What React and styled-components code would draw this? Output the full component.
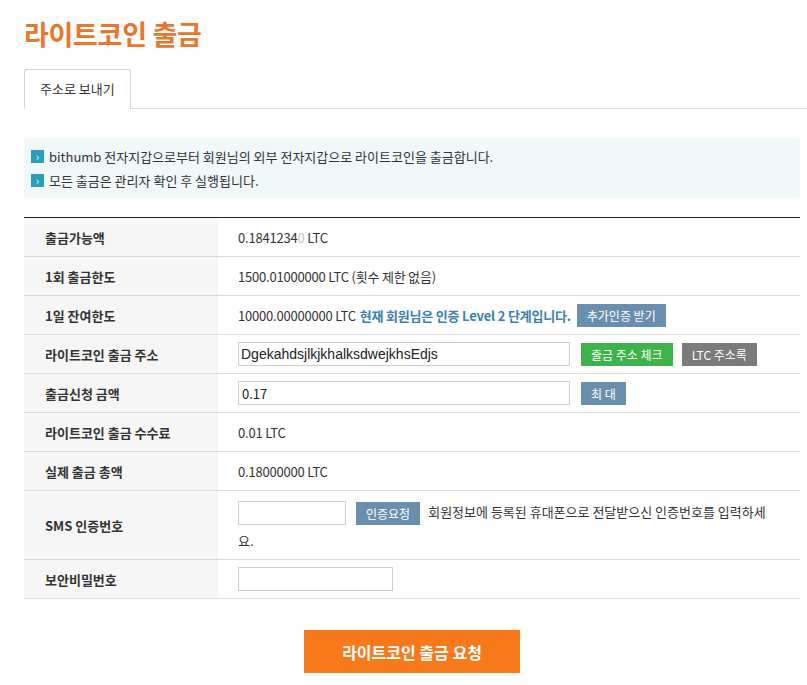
import React from "react";
import styled, { createGlobalStyle } from "styled-components";

const Global = createGlobalStyle`
  html, body { margin: 0; padding: 0; background: #fff; }
  body {
    font-family: "Noto Sans CJK KR", "Noto Sans", sans-serif;
    font-size: 13px;
    color: #333;
  }
  * { box-sizing: border-box; }
`;

const Page = styled.div`
  width: 807px;
  padding: 17px 7px 40px 24px;
`;

const Title = styled.h1`
  margin: 0;
  font-size: 27px;
  line-height: 33px;
  font-weight: 700;
  color: #e8772e;
  letter-spacing: -0.3px;
`;

const TabBar = styled.div`
  display: flex;
  margin: 19px -7px 0 0;
  border-bottom: 1px solid #dcdcdc;
`;

const Tab = styled.div`
  height: 40px;
  margin-bottom: -1px;
  padding: 0 15px;
  line-height: 38px;
  border: 1px solid #d4d4d4;
  border-bottom: 1px solid #fff;
  border-radius: 3px 3px 0 0;
  background: #fff;
  color: #333;
  font-size: 13px;
`;

const Notice = styled.ul`
  list-style: none;
  margin: 29px 0 0;
  padding: 6px 7px;
  background: #f0f8fa;
  border-radius: 3px;
`;

const NoticeItem = styled.li`
  display: flex;
  align-items: center;
  gap: 5px;
  height: 24px;
  color: #333;
`;

const Bullet = styled.span`
  display: inline-flex;
  align-items: center;
  justify-content: center;
  width: 13px;
  height: 13px;
  background: #2b9db9;
  color: #fff;
  font-size: 11px;
  line-height: 1;
`;

const Table = styled.div`
  margin-top: 19px;
  border-top: 1px solid #222;
`;

const Row = styled.div`
  display: grid;
  grid-template-columns: 194px 1fr;
  border-bottom: 1px solid #dcdcdc;
  min-height: ${(p) => p.$h || 39}px;
`;

const Label = styled.div`
  display: flex;
  align-items: center;
  padding-left: 21px;
  background: #f6f6f6;
  font-weight: 700;
  color: #333;
`;

const Value = styled.div`
  display: flex;
  align-items: center;
  padding-left: 20px;
  color: #333;
  letter-spacing: -0.2px;
`;

const WrapValue = styled.div`
  padding: 6px 0 4px 20px;
  line-height: 29px;
  color: #333;
`;

const Faded = styled.span`
  color: #c8c8c8;
`;

const Highlight = styled.strong`
  color: #3a80b2;
  font-weight: 700;
  margin-left: 4px;
`;

const Input = styled.input`
  width: ${(p) => p.$w}px;
  height: 24px;
  padding: 0 ${(p) => (p.$big ? 2 : 3)}px;
  border: 1px solid #cfcfcf;
  background: #fff;
  color: #222;
  font-family: ${(p) => (p.$big ? '"Liberation Sans", Arial, sans-serif' : '"Noto Sans CJK KR", sans-serif')};
  font-size: ${(p) => (p.$big ? 14 : 13)}px;
  letter-spacing: 0;
  outline: none;
  vertical-align: middle;
`;

const Btn = styled.button`
  height: 23px;
  margin-left: ${(p) => p.$ml || 0}px;
  padding: 0 10px;
  border: none;
  background: ${(p) => p.$bg};
  color: #fff;
  font-family: "Noto Sans CJK KR", sans-serif;
  font-size: 12px;
  line-height: 23px;
  letter-spacing: 0;
  vertical-align: middle;
  cursor: pointer;
`;

const Help = styled.span`
  margin-left: 8px;
`;

const Actions = styled.div`
  display: flex;
  justify-content: center;
  margin-top: 31px;
`;

const Submit = styled.button`
  width: 216px;
  height: 43px;
  border: none;
  background: #f7791a;
  color: #fff;
  font-family: "Noto Sans CJK KR", sans-serif;
  font-size: 16px;
  font-weight: 700;
  cursor: pointer;
`;

export default function App() {
  return (
    <>
      <Global />
      <Page>
        <Title>라이트코인 출금</Title>
        <TabBar>
          <Tab>주소로 보내기</Tab>
        </TabBar>
        <Notice>
          <NoticeItem>
            <Bullet>›</Bullet>
            bithumb 전자지갑으로부터 회원님의 외부 전자지갑으로 라이트코인을 출금합니다.
          </NoticeItem>
          <NoticeItem>
            <Bullet>›</Bullet>
            모든 출금은 관리자 확인 후 실행됩니다.
          </NoticeItem>
        </Notice>
        <Table>
          <Row>
            <Label>출금가능액</Label>
            <Value>
              0.1841234<Faded>0</Faded>&nbsp;LTC
            </Value>
          </Row>
          <Row>
            <Label>1회 출금한도</Label>
            <Value>1500.01000000 LTC (횟수 제한 없음)</Value>
          </Row>
          <Row>
            <Label>1일 잔여한도</Label>
            <Value>
              10000.00000000 LTC
              <Highlight>현재 회원님은 인증 Level 2 단계입니다.</Highlight>
              <Btn $bg="#6a8fae" $ml={6}>추가인증 받기</Btn>
            </Value>
          </Row>
          <Row>
            <Label>라이트코인 출금 주소</Label>
            <Value>
              <Input $w={332} $big defaultValue="DgekahdsjlkjkhalksdwejkhsEdjs" />
              <Btn $bg="#3db34a" $ml={11}>출금 주소 체크</Btn>
              <Btn $bg="#7b7b7b" $ml={9}>LTC 주소록</Btn>
            </Value>
          </Row>
          <Row>
            <Label>출금신청 금액</Label>
            <Value>
              <Input $w={332} defaultValue="0.17" />
              <Btn $bg="#6a8fae" $ml={11}>최 대</Btn>
            </Value>
          </Row>
          <Row>
            <Label>라이트코인 출금 수수료</Label>
            <Value>0.01 LTC</Value>
          </Row>
          <Row>
            <Label>실제 출금 총액</Label>
            <Value>0.18000000 LTC</Value>
          </Row>
          <Row $h={69}>
            <Label>SMS 인증번호</Label>
            <WrapValue>
              <Input $w={108} />
              <Btn $bg="#6a8fae" $ml={10}>인증요청</Btn>
              <Help>
                회원정보에 등록된 휴대폰으로 전달받으신 인증번호를 입력하세
                <br />요.
              </Help>
            </WrapValue>
          </Row>
          <Row>
            <Label>보안비밀번호</Label>
            <Value>
              <Input $w={155} type="password" />
            </Value>
          </Row>
        </Table>
        <Actions>
          <Submit>라이트코인 출금 요청</Submit>
        </Actions>
      </Page>
    </>
  );
}
